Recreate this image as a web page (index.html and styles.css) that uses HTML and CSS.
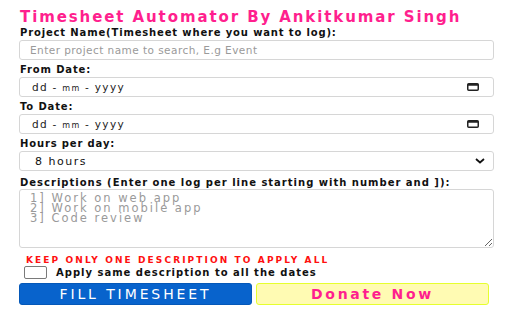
FILE: index.html
```html
<!DOCTYPE html>
<html>
<head>
<meta charset="utf-8">
<link rel="stylesheet" href="styles.css">
</head>
<body>
<div class="app">
  <h1 class="title">Timesheet Automator By Ankitkumar Singh</h1>

  <label class="lbl">Project Name(Timesheet where you want to log):</label>
  <input class="field text" type="text" placeholder="Enter project name to search, E.g Event">

  <label class="lbl">From Date:</label>
  <div class="field date">
    <span class="date-text">dd - <span class="mm">mm</span> - yyyy</span>
    <svg class="cal" width="12" height="8" viewBox="0 0 12 8"><rect x="0.75" y="0.75" width="10.5" height="6.5" rx="1" fill="none" stroke="#222" stroke-width="1.5"/><rect x="0.75" y="0.75" width="10.5" height="2" fill="#222"/></svg>
  </div>

  <label class="lbl">To Date:</label>
  <div class="field date">
    <span class="date-text">dd - <span class="mm">mm</span> - yyyy</span>
    <svg class="cal" width="12" height="8" viewBox="0 0 12 8"><rect x="0.75" y="0.75" width="10.5" height="6.5" rx="1" fill="none" stroke="#222" stroke-width="1.5"/><rect x="0.75" y="0.75" width="10.5" height="2" fill="#222"/></svg>
  </div>

  <label class="lbl">Hours per day:</label>
  <div class="field select">
    <span class="sel-text">8 hours</span>
    <svg class="chev" width="10" height="6" viewBox="0 0 10 6"><polyline points="1,1 5,4.5 9,1" fill="none" stroke="#111" stroke-width="1.8"/></svg>
  </div>

  <label class="lbl desc-lbl">Descriptions (Enter one log per line starting with number and ]):</label>
  <textarea class="field area" placeholder="1] Work on web app&#10;2] Work on mobile app&#10;3] Code review"></textarea>

  <p class="warn">KEEP ONLY ONE DESCRIPTION TO APPLY ALL</p>
  <div class="check-row">
    <span class="box"></span>
    <span class="check-text">Apply same description to all the dates</span>
  </div>

  <div class="buttons">
    <button class="btn fill">FILL TIMESHEET</button>
    <button class="btn donate">Donate Now</button>
  </div>
</div>
</body>
</html>
```

FILE: styles.css
```css
html, body {
  margin: 0;
  padding: 0;
  background: #ffffff;
}

.app {
  display: flex;
  flex-direction: column;
  width: 475px;
  padding: 8px 0 0 19px;
  font-family: "DejaVu Sans", sans-serif;
  color: #111;
}

.title {
  margin: 0;
  height: 19px;
  line-height: 19px;
  font-size: 15px;
  font-weight: bold;
  color: #ff1f8e;
  letter-spacing: 1.9px;
  padding-left: 1px;
  white-space: nowrap;
}

.lbl {
  display: block;
  height: 12px;
  line-height: 12px;
  font-size: 10px;
  font-weight: bold;
  letter-spacing: 0.85px;
  margin-bottom: 1px;
  padding-left: 1px;
  white-space: nowrap;
}

.field {
  box-sizing: border-box;
  width: 475px;
  height: 20px;
  border: 1px solid #d6d6d6;
  border-radius: 3px;
  background: #fff;
  margin: 0 0 4px 0;
}

.text {
  padding: 0 10px;
  font-family: "DejaVu Sans", sans-serif;
  font-size: 10.5px;
  letter-spacing: 0.45px;
  outline: none;
}

.text::placeholder {
  color: #9a9a9a;
}

.date, .select {
  display: flex;
  align-items: center;
  justify-content: space-between;
  padding: 0 14px 0 12px;
}

.date-text {
  font-size: 10.5px;
  letter-spacing: 1.3px;
  color: #222;
}

.date-text .mm {
  font-size: 8px;
}

.cal {
  display: block;
}

.select {
  padding: 0 8px 0 15px;
  margin-bottom: 6px;
}

.sel-text {
  font-size: 11px;
  letter-spacing: 1.5px;
  color: #111;
}

.chev {
  display: block;
}

.desc-lbl {
  margin-bottom: 0;
  letter-spacing: 1px;
}

.area {
  height: 59px;
  padding: 3px 10px;
  font-family: "DejaVu Sans", sans-serif;
  font-size: 11.5px;
  line-height: 10px;
  letter-spacing: 2px;
  resize: vertical;
  outline: none;
  margin-bottom: 6px;
}

.area::placeholder {
  color: #9a9a9a;
}

.warn {
  margin: 0;
  padding-left: 7px;
  height: 12px;
  line-height: 12px;
  font-size: 9px;
  font-weight: bold;
  color: #ff1010;
  letter-spacing: 2.1px;
  white-space: nowrap;
}

.check-row {
  display: flex;
  align-items: center;
  height: 13px;
  margin-bottom: 4px;
  padding-left: 5px;
}

.box {
  box-sizing: border-box;
  width: 23px;
  height: 13px;
  border: 1.5px solid #7a7a7a;
  border-radius: 2px;
  margin-right: 9px;
  background: #fff;
}

.check-text {
  font-size: 10px;
  font-weight: bold;
  letter-spacing: 1px;
  white-space: nowrap;
}

.buttons {
  display: flex;
  gap: 4px;
}

.btn {
  box-sizing: border-box;
  height: 22px;
  width: 233px;
  border-radius: 3px;
  font-family: "DejaVu Sans", sans-serif;
  cursor: pointer;
  padding: 0;
  white-space: nowrap;
}

.fill {
  background: #0863cc;
  border: 1px solid #0558b8;
  color: #fff;
  font-size: 14px;
  letter-spacing: 2.9px;
}

.donate {
  background: #fffbb3;
  border: 1.5px solid #e6ff2e;
  color: #ff1f8e;
  font-size: 14px;
  font-weight: bold;
  letter-spacing: 2.7px;
}
```
